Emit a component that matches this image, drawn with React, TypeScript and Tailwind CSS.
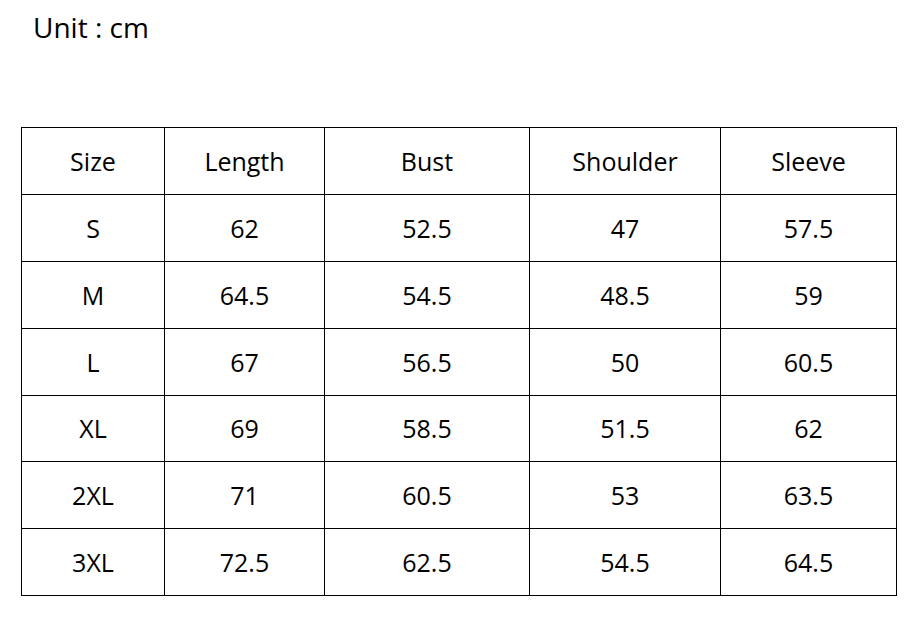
import React from "react";

const headers = ["Size", "Length", "Bust", "Shoulder", "Sleeve"];
const rows = [
  ["S", "62", "52.5", "47", "57.5"],
  ["M", "64.5", "54.5", "48.5", "59"],
  ["L", "67", "56.5", "50", "60.5"],
  ["XL", "69", "58.5", "51.5", "62"],
  ["2XL", "71", "60.5", "53", "63.5"],
  ["3XL", "72.5", "62.5", "54.5", "64.5"],
];

export default function App() {
  const all = [headers, ...rows];
  return (
    <div
      className="w-[920px] h-[620px] bg-white text-black relative"
      style={{ fontFamily: '"Open Sans", sans-serif' }}
    >
      <div className="pl-[33px] pt-[8px] text-[28px] leading-[38px]">Unit : cm</div>
      <div className="ml-[21px] mt-[81px] w-[876px] bg-black p-px grid grid-cols-[142px_159px_204px_190px_175px] grid-rows-[66px_66px_66px_66px_65px_66px_66px] gap-px">
        {all.map((r, i) =>
          r.map((c, j) => (
            <div
              key={i + "-" + j}
              className="bg-white flex items-center justify-center text-[25px] leading-none"
            >
              {c}
            </div>
          ))
        )}
      </div>
    </div>
  );
}
